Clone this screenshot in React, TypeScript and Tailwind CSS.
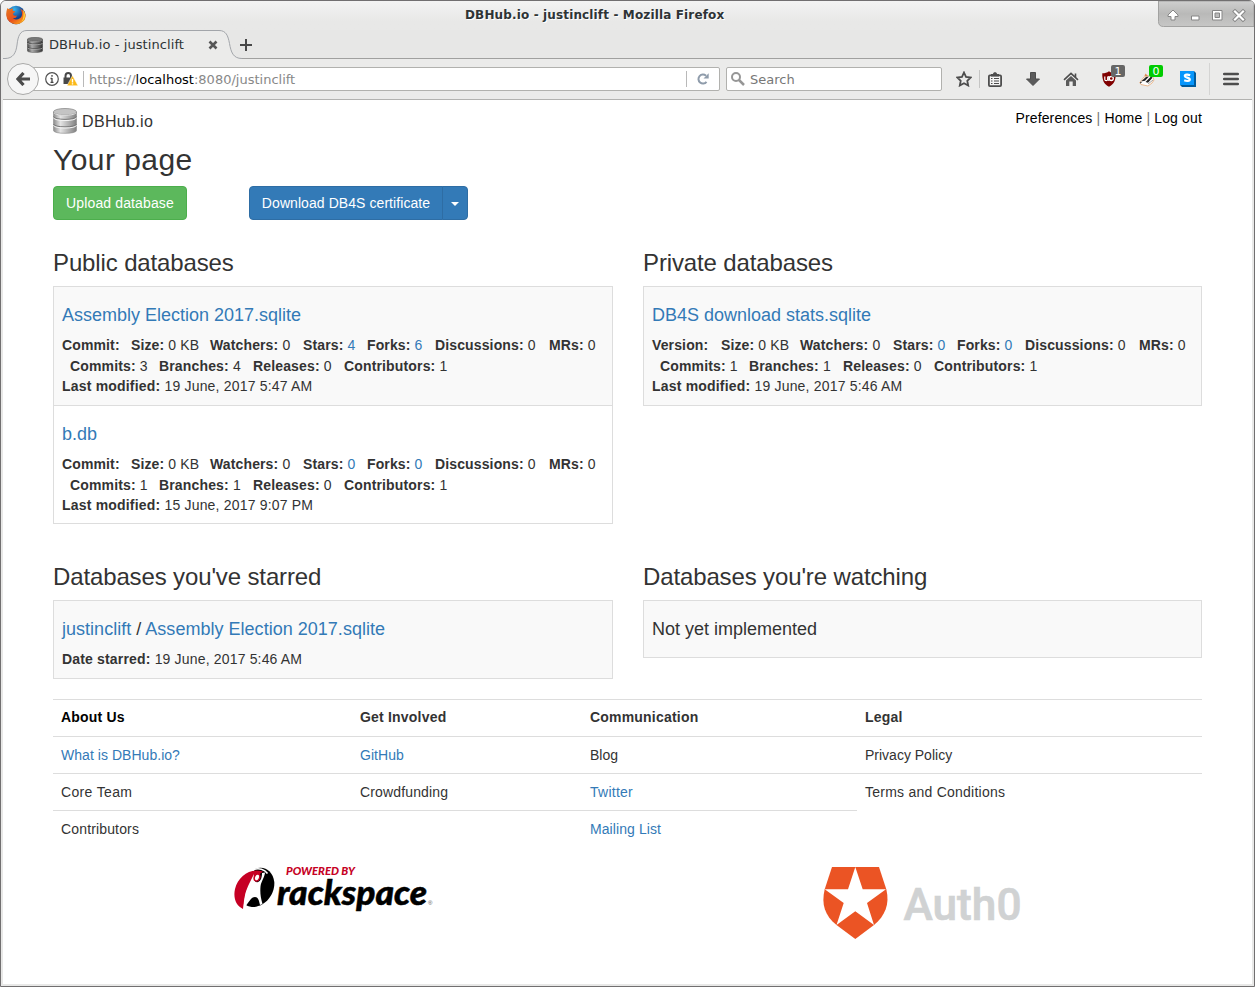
import React from "react";

type Stat = [label: string, value: string, width: string, link?: boolean];

function Link({ children }: { children: React.ReactNode }) {
  return <a className="text-[#337ab7]">{children}</a>;
}

function StatLine({ items, className }: { items: Stat[]; className: string }) {
  return (
    <div className={`flex whitespace-pre ${className}`}>
      {items.map(([label, value, width, link]) => (
        <div key={label} className={`shrink-0 ${width}`}>
          <b>{label}</b> {link ? <Link>{value}</Link> : value}
        </div>
      ))}
    </div>
  );
}

interface Database {
  name: string;
  ref: string;
  stars: string;
  forks: string;
  commits: string;
  branches: string;
  modified: string;
}

function DatabaseInfo({ db }: { db: Database }) {
  return (
    <>
      <h4 className="pt-[10px] pb-[10px] text-[18px] leading-5 tracking-normal text-[#337ab7]">{db.name}</h4>
      <StatLine
        className="h-[21px] leading-5 tracking-[0.13px]"
        items={[
          [db.ref, "", "w-[69px]"],
          ["Size:", "0 KB", "w-[79px]"],
          ["Watchers:", "0", "w-[93px]"],
          ["Stars:", db.stars, "w-[64px]", true],
          ["Forks:", db.forks, "w-[68px]", true],
          ["Discussions:", "0", "w-[114px]"],
          ["MRs:", "0", "w-[50px]"],
        ]}
      />
      <StatLine
        className="h-5 pl-2 leading-5 tracking-[0.15px]"
        items={[
          ["Commits:", db.commits, "w-[89px]"],
          ["Branches:", db.branches, "w-[94px]"],
          ["Releases:", "0", "w-[91px]"],
          ["Contributors:", "1", "w-[120px]"],
        ]}
      />
      <div className="leading-5 tracking-[0.19px]">
        <b>Last modified:</b> {db.modified}
      </div>
    </>
  );
}

const assembly: Database = {
  name: "Assembly Election 2017.sqlite", ref: "Commit:", stars: "4", forks: "6",
  commits: "3", branches: "4", modified: "19 June, 2017 5:47 AM",
};
const bdb: Database = {
  name: "b.db", ref: "Commit:", stars: "0", forks: "0",
  commits: "1", branches: "1", modified: "15 June, 2017 9:07 PM",
};
const stats: Database = {
  name: "DB4S download stats.sqlite", ref: "Version:", stars: "0", forks: "0",
  commits: "1", branches: "1", modified: "19 June, 2017 5:46 AM",
};

function DiskStack({ dark, className }: { dark?: boolean; className: string }) {
  const id = dark ? "diskDark" : "diskLight";
  const edge = dark ? "#444" : "#8a8a8a";
  return (
    <svg viewBox="0 0 24 26" preserveAspectRatio="none" className={className}>
      <defs>
        <linearGradient id={id}>
          <stop offset="0" stopColor={dark ? "#444" : "#8c8c8c"} />
          <stop offset=".3" stopColor={dark ? "#aaa" : "#e4e4e4"} />
          <stop offset="1" stopColor={dark ? "#333" : "#808080"} />
        </linearGradient>
      </defs>
      <path d="M.5 4v18.500c0 3.800 23 3.800 23 0V4z" fill={`url(#${id})`} stroke={edge} strokeWidth=".6" />
      {[8.5, 16].map((y) => (
        <g key={y} fill="none">
          <path d={`M.5 ${y}c0 3.800 23 3.800 23 0`} stroke={dark ? "#333" : "#777"} strokeWidth="1" />
          <path d={`M.5 ${y + 1.200}c0 3.800 23 3.800 23 0`} stroke={dark ? "#bbb" : "#f4f4f4"} strokeWidth="1" />
        </g>
      ))}
      <ellipse cx="12" cy="3.800" rx="11.500" ry="3.300" fill={dark ? "#777" : "#c4c4c4"} stroke={edge} strokeWidth=".8" />
      <path d="M1 4.800c2 3.400 20 3.400 22 0" fill="none" stroke={dark ? "#bbb" : "#f0f0f0"} strokeWidth=".8" />
    </svg>
  );
}

function FirefoxLogo() {
  return (
    <svg viewBox="0 0 20 20" className="h-5 w-5">
      <defs>
        <linearGradient id="fox" x1="0" y1="0" x2=".9" y2="1">
          <stop offset="0" stopColor="#e87b22" />
          <stop offset=".55" stopColor="#e8501b" />
          <stop offset="1" stopColor="#ffb21c" />
        </linearGradient>
        <radialGradient id="globe" cx=".4" cy=".2">
          <stop offset="0" stopColor="#36b5ee" />
          <stop offset="1" stopColor="#15408c" />
        </radialGradient>
      </defs>
      <circle cx="10" cy="10" r="9.3" fill="url(#globe)" />
      <path d="M1.5 3C2 4 3 4 4 4l3-.5c0 1-.6 1.5.2 2.5l2 .2c0 1-1.8 1.4-2 2.3C6.800 11 9 11 11 10.400c-.5 2-2 3-4 2.500 2.500 2.600 7 1.700 8.500-1.300 1.200-2.600.5-5.600-1.500-8.200 4 1.900 6 5 5.700 8A9.700 9 0 0 1 .4 11C0 8 .5 5 1.500 3z" fill="url(#fox)" />
      <path d="M17 4.500c3 4 2.700 9.500-1.500 12.500 2-3 2.500-7.500 1.500-12.500z" fill="#ffd33a" />
    </svg>
  );
}

function TitleBar() {
  return (
    <div className="flex h-[29px] items-start bg-gradient-to-b from-[#f3f3f3] to-[#e8e8e7] to-70%">
      <div className="pt-1 pl-[5px]"><FirefoxLogo /></div>
      <div className="flex-1 pl-[439px] font-['DejaVu_Sans'] text-[12px] leading-[28px] font-bold tracking-[0.14px] whitespace-pre text-[#2e3436] [text-shadow:1px_1px_0_#fff]">
        DBHub.io - justinclift - Mozilla Firefox
      </div>
      <svg viewBox="0 0 96 26" className="h-[26px] w-24">
        <defs>
          <linearGradient id="wm" x2="0" y2="1">
            <stop stopColor="#cfcfcf" />
            <stop offset=".5" stopColor="#b9b9b8" />
            <stop offset="1" stopColor="#c7c7c6" />
          </linearGradient>
        </defs>
        <path d="M.5 0v20.500q0 5 5 5H96V0z" fill="url(#wm)" stroke="#a2a2a1" />
        <g fill="none" strokeLinejoin="round">
          <path d="m15 9-5 5v1.500h3v3.500h4v-3.500h3V14z" fill="#fff" stroke="#858585" />
          <rect x="33.500" y="15" width="7.500" height="4" fill="#fff" stroke="#858585" />
          <rect x="54.500" y="9.500" width="9.500" height="9.500" fill="#fff" stroke="#858585" />
          <rect x="57" y="12" width="4.500" height="4.500" fill="#bbb" stroke="#858585" />
          <path d="m77 10.500 8 8m0-8-8 8" stroke="#858585" strokeWidth="4" strokeLinecap="square" />
          <path d="m77 10.500 8 8m0-8-8 8" stroke="#fff" strokeWidth="2.200" strokeLinecap="square" />
        </g>
      </svg>
    </div>
  );
}

function TabStrip() {
  return (
    <div className="flex h-[29px] bg-[#e7e7e6]">
      <div className="relative flex h-full w-[237px] items-center">
        <svg viewBox="0 0 239 29" className="absolute top-0 left-0 h-[29px] w-[239px]">
          <path d="M0 28.500h2C10 28.500 13 23 14 15 15 6 17 .5 24 .5h192c7 0 9 5 10.500 13C228 22 230 28.500 239 28.500V29H0z" fill="#ebebea" />
          <path d="M0 28.500h2C10 28.500 13 23 14 15 15 6 17 .5 24 .5h192c7 0 9 5 10.500 13C228 22 230 28.500 239 28.500" fill="none" stroke="#a2a5aa" />
        </svg>
        <DiskStack dark className="relative ml-[24px] h-4 w-4" />
        <div className="relative ml-[6px] w-[159px] font-['DejaVu_Sans'] text-[13px] leading-4 tracking-[0.08px] text-[#2e3436]">DBHub.io - justinclift</div>
        <svg viewBox="0 0 10 10" className="relative h-[10px] w-[10px]">
          <path d="m1.500 1.500 7 7m0-7-7 7" stroke="#555" strokeWidth="2.600" />
        </svg>
      </div>
      <div className="flex flex-1 items-center border-b border-[#a0a09f]">
        <svg viewBox="0 0 12 12" className="mt-px h-3 w-3"><path d="M6 0v12M0 6h12" stroke="#484848" strokeWidth="2" /></svg>
      </div>
    </div>
  );
}

function Badge({ text, className }: { text: string; className: string }) {
  return (
    <span className={`absolute flex h-3 w-[14px] items-center justify-center rounded-[2px] font-['DejaVu_Sans'] text-[11px] leading-none text-white ${className}`}>
      {text}
    </span>
  );
}

function Toolbar() {
  return (
    <div className="flex h-[41px] items-center border-b border-[#b2b2b0] bg-[#ebebea] font-['DejaVu_Sans'] text-[13px]">
      <div className="relative z-10 ml-1 flex h-8 w-8 items-center justify-center rounded-full border border-[#a9a9a8] bg-[#f6f6f6]">
        <svg viewBox="0 0 14 14" className="h-[14px] w-[14px]">
          <path d="M7.500 1 2 7l5.500 6M2.500 7H14" fill="none" stroke="#4b4b4b" strokeWidth="3.200" />
        </svg>
      </div>
      <div className="-ml-[8px] flex h-6 w-[689px] items-center rounded-r-[2px] border border-[#b1b1ae] bg-white pl-[13px]">
        <svg viewBox="0 0 14 14" className="h-[14px] w-[14px]">
          <circle cx="7" cy="7" r="6.300" fill="none" stroke="#505050" strokeWidth="1.200" />
          <path d="M7 3v1.800M7 6v4.500M5.500 6.500H7M5.500 10.300h3" fill="none" stroke="#444" strokeWidth="1.300" />
        </svg>
        <svg viewBox="0 0 15 14" className="ml-1 h-[14px] w-[15px]">
          <path d="M2.500 6V4C2.500 0 8 0 8 4v2" fill="none" stroke="#484848" strokeWidth="2" />
          <path d="M.5 5.500h9V12h-9z" fill="#484848" />
          <path d="M9.500 3.500 15 13.700H4z" fill="#fbb917" stroke="#fff" strokeWidth=".5" />
          <path d="M9.500 7v3.500M9.500 11.300v1.300" stroke="#fff" strokeWidth="1.400" />
        </svg>
        <div className="ml-[5px] h-4 w-px bg-[#b9b9b9]" />
        <div className="ml-[5px] flex-1 pt-px text-[#888]">
          https://<span className="text-black">localhost</span>:8080/justinclift
        </div>
        <div className="h-4 w-px bg-[#b9b9b9]" />
        <svg viewBox="0 0 12 12" className="mr-[10px] ml-[10px] h-3 w-3">
          <path d="M9.500 8.800A4.500 4.500 0 1 1 9 2.700" fill="none" stroke="#8f9cab" strokeWidth="2" />
          <path d="M11.700.3v5.200H6.500z" fill="#8f9cab" />
        </svg>
      </div>
      <div className="ml-[6px] flex h-6 w-[216px] items-center rounded-[2px] border border-[#b1b1ae] bg-white pl-1 text-[#777]">
        <svg viewBox="0 0 14 14" className="h-[14px] w-[14px]">
          <circle cx="5" cy="5" r="4" fill="none" stroke="#969696" strokeWidth="2" />
          <path d="m8 8 5 5" stroke="#969696" strokeWidth="2.500" />
        </svg>
        <span className="ml-[5px] pt-px">Search</span>
      </div>
      <div className="ml-[7px] flex w-[30px] justify-center">
        <svg viewBox="0 0 16 16" className="h-4 w-4">
          <path d="m8 1.500 2 4.400 4.800.6-3.500 3.300.9 4.700L8 12.200l-4.200 2.300.9-4.700L1.200 6.500 6 5.900z" fill="none" stroke="#4d4d4d" strokeWidth="1.800" />
        </svg>
      </div>
      <div className="flex h-[18px] w-8 items-center justify-center border-l border-[#c5c5c4] pr-px">
        <svg viewBox="0 0 14 15" className="h-[15px] w-[14px]">
          <rect x=".9" y="3.400" width="12.200" height="10.700" rx="1" fill="#f4f4f4" stroke="#4d4d4d" strokeWidth="1.800" />
          <path d="M3 4.500V2h2c0-2.500 4-2.500 4 0h2v2.500z" fill="#4d4d4d" />
          <path d="M3 6.500h1.500M6 6.500h5M3 9h1.500M6 9h5M3 11.500h1.500M6 11.500h5" stroke="#4d4d4d" strokeWidth="1.200" />
        </svg>
      </div>
      <div className="flex w-11 justify-center">
        <svg viewBox="0 0 14 14" className="h-[14px] w-[14px]"><path d="M4.500.5h5V7h4L7 13.500.5 7h4z" fill="#5b5b5b" stroke="#4d4d4d" /></svg>
      </div>
      <div className="flex w-8 justify-center">
        <svg viewBox="0 0 16 14" className="h-[14px] w-4">
          <path d="M3 8.500 8 4l5 4.500V14h-3.300V9.500H6.300V14H3z" fill="#5b5b5b" />
          <path d="M1 7.800 8 1.300l7 6.500M12.500 1.500V5" fill="none" stroke="#4d4d4d" strokeWidth="1.600" />
        </svg>
      </div>
      <div className="relative flex w-11 justify-center">
        <svg viewBox="0 0 16 16" className="h-4 w-4">
          <path d="M8 .3c2 1.400 4 2 6.700 2C15 9 13 13.500 8 15.800 3 13.500 1 9 1.300 2.300 4 2.300 6 1.700 8 .3z" fill="#800000" />
          <path d="M3.800 5.500v3q0 1.200 1.400 1.200T6.700 8.500v-3" fill="none" stroke="#fff" strokeWidth="1.200" />
          <circle cx="10.300" cy="7.500" r="2" fill="none" stroke="#fff" strokeWidth="1.300" />
          <path d="M7.800 5v5" stroke="#fff" strokeWidth="1.200" />
        </svg>
        <Badge text="1" className="-top-[6px] left-[24px] bg-[#666]" />
      </div>
      <div className="relative flex w-8 justify-center">
        <svg viewBox="0 0 16 16" className="h-4 w-4">
          <path d="M.8 11.500 5 6l8-2 2 5-2 3-4 3-7-1.500z" fill="#fff" stroke="#e9a873" strokeWidth=".8" />
          <path d="M2 10.500 7 6l3-.5-4 4.300zM6.500 11 12 5.500l1.500 1.300-4.500 5z" fill="#222" />
          <path d="m1 10.800 2 .7-1.500 1z" fill="#222" />
          <path d="m5.500 5 1-2.500L9 5z" fill="#d78d55" />
          <path d="m9 13 5-4" stroke="#888" strokeWidth=".8" />
        </svg>
        <Badge text="0" className="-top-[6px] left-[18px] bg-[#00cc00]" />
      </div>
      <div className="flex w-[46px] justify-center pl-1">
        <svg viewBox="0 0 16 16" className="h-4 w-4">
          <path d="M0 0h14l2 2v14H2l-2-2z" fill="#005b9d" />
          <path d="M0 0h14v14H0z" fill="#0796fc" />
          <path d="M10.200 4.200C8 3.300 4.800 3.400 4.800 5c0 2 5 1.300 5 3.500 0 1.800-3.300 1.800-5.600.8" fill="none" stroke="#fff" strokeWidth="2.200" />
        </svg>
      </div>
      <div className="flex h-8 flex-1 items-center justify-center border-l border-[#d4d4d3]">
        <svg viewBox="0 0 16 14" className="h-[14px] w-4"><path d="M1.200 2h13.600M1.200 7h13.600M1.200 12h13.600" stroke="#4d4d4d" strokeWidth="2.600" strokeLinecap="round" /></svg>
      </div>
    </div>
  );
}

const footerCols = [
  { width: "w-[299px]", title: "About Us", titleColor: "text-black", items: [["What is DBHub.io?", "tracking-[0.04px]", true], ["Core Team", "tracking-[0.35px]"], ["Contributors", "tracking-[0.15px]"]] },
  { width: "w-[230px]", title: "Get Involved", titleColor: "", items: [["GitHub", "tracking-[0.05px]", true], ["Crowdfunding", "tracking-[0.15px]"], ["", ""]] },
  { width: "w-[275px]", title: "Communication", titleColor: "", items: [["Blog", ""], ["Twitter", "tracking-[0.25px]", true], ["Mailing List", "tracking-[0.08px]", true]] },
  { width: "w-[345px]", title: "Legal", titleColor: "", items: [["Privacy Policy", ""], ["Terms and Conditions", "tracking-[0.24px]"]] },
] as { width: string; title: string; titleColor: string; items: [string, string, boolean?][] }[];

function Footer() {
  return (
    <div className="mt-5 flex h-[149px]">
      {footerCols.map((col) => (
        <div key={col.title} className={col.width}>
          <div className={`h-[37px] border-t border-[#ddd] px-2 pt-[7px] leading-5 font-bold tracking-[0.2px] ${col.titleColor}`}>{col.title}</div>
          {col.items.map(([text, tracking, link], i) => (
            <div key={i} className={`h-[37px] border-t border-[#ddd] px-2 pt-2 leading-5 ${tracking}`}>
              {link ? <Link>{text}</Link> : text}
            </div>
          ))}
        </div>
      ))}
    </div>
  );
}

function RackspaceLogo() {
  return (
    <svg viewBox="0 0 200 48" className="h-12 w-[200px] overflow-visible">
      <path d="M21 3C30-1 39 5 40.300 16 41 28 32 40 20 41c-3 0-6-.5-8-2L15 15z" fill="#000" />
      <path d="M29 5.500C17 1.500 4 10 1 23c-2 9 1 17 8 20L12 26l6-12z" fill="#c60024" />
      <path d="M15.500 17 20 8c-1 7 2 9 4 8 3-1 4-5 4-9l3-.500c-.3 5-4 9-4.500 14-.5 6 0 11 2 17.500L26 39c-1-5-2-8-5-8-4 0-6 5-8.500 8L9.500 43c0-10 2-18 6-26z" fill="#fff" />
      <path d="M18 4.200C25 .8 31 4 33.500 7.500" fill="none" stroke="#fff" strokeWidth="1.500" />
      <ellipse cx="23" cy="11.500" rx="2.600" ry="3.600" transform="rotate(22 23 11.500)" fill="#fff" stroke="#c60024" strokeWidth="1.500" />
      <text x="52" y="9" textLength="69" lengthAdjust="spacingAndGlyphs" fill="#c60024" className="font-['Lato'] text-[11px] font-black italic">POWERED BY</text>
      <text x="43" y="39" textLength="150" lengthAdjust="spacingAndGlyphs" fill="#000" stroke="#000" strokeWidth=".5" className="font-['Lato'] text-[35px] font-black italic">rackspace</text>
      <text x="194" y="39" fill="#555" className="font-['Liberation_Sans'] text-[6px]">®</text>
    </svg>
  );
}

function Auth0Logo() {
  return (
    <svg viewBox="0 0 200 74" className="h-[74px] w-[200px] overflow-visible">
      <path d="M10 1h47l7.300 22.300C68 38 63 50 52 59L33.300 73 14.500 59C3 50-1 38 2.700 23.300z" fill="#eb5424" />
      <path d="m33.300 1 7.400 22.300H64L45 37l7 22-18.700-13.700L14.500 59l7.200-22-19-13.700H26z" fill="#fff" />
      <text x="81.500" y="54" textLength="118" lengthAdjust="spacingAndGlyphs" fill="#d0d2d3" stroke="#d0d2d3" strokeWidth=".7" className="font-['Roboto'] text-[45px] font-medium">Auth0</text>
    </svg>
  );
}

function SectionTitle({ children }: { children: React.ReactNode }) {
  return <h3 className="h-[37px] text-[24px] leading-[26px] tracking-[-0.13px]">{children}</h3>;
}

export default function App() {
  return (
    <div className="h-[987px] w-[1255px] overflow-hidden bg-white">
      <div className="flex h-full w-full flex-col overflow-hidden rounded-t-[6px] border border-[#716f70] bg-[#e8e8e7]">
        <TitleBar />
        <div className="mx-[2px] mb-[2px] flex flex-1 flex-col overflow-hidden">
          <TabStrip />
          <Toolbar />
          <div className="flex-1 bg-white px-[50px] font-['Liberation_Sans',sans-serif] text-[14px] leading-5 text-[#333]">
            <div className="flex h-[47px] justify-between">
              <div className="flex pt-2">
                <DiskStack className="h-[26px] w-6" />
                <span className="ml-[5px] text-[16px] leading-[28px] tracking-[0.35px]">DBHub.io</span>
              </div>
              <div className="pt-2 tracking-[0.15px] whitespace-pre text-[#777]">
                <span className="text-black">Preferences</span> | <span className="text-black">Home</span> | <span className="text-black">Log out</span>
              </div>
            </div>
            <h2 className="h-[39px] text-[30px] leading-[26px] tracking-[0.45px]">Your page</h2>
            <div className="flex h-[34px]">
              <button className="w-[134px] rounded-[4px] border border-[#4cae4c] bg-[#5cb85c] tracking-[0.13px] text-white">Upload database</button>
              <button className="ml-[62px] w-[194px] rounded-l-[4px] border border-[#2e6da4] bg-[#337ab7] tracking-[0.07px] text-white">Download DB4S certificate</button>
              <button className="-ml-px flex w-[26px] items-center justify-center rounded-r-[4px] border border-[#2e6da4] bg-[#337ab7]">
                <svg viewBox="0 0 8 4" className="mt-px h-1 w-2"><path d="M0 0h8L4 4z" fill="#fff" /></svg>
              </button>
            </div>
            <div className="mt-[30px] flex h-[274px] justify-between">
              <div className="w-[560px]">
                <SectionTitle>Public databases</SectionTitle>
                <div className="-mt-px border border-[#ddd]">
                  <div className="h-[118px] bg-[#f9f9f9] px-2 pt-2"><DatabaseInfo db={assembly} /></div>
                  <div className="h-[118px] border-t border-[#ddd] px-2 pt-2"><DatabaseInfo db={bdb} /></div>
                </div>
              </div>
              <div className="w-[559px]">
                <SectionTitle>Private databases</SectionTitle>
                <div className="-mt-px h-[120px] border border-[#ddd] bg-[#f9f9f9] px-2 pt-2"><DatabaseInfo db={stats} /></div>
              </div>
            </div>
            <div className="mt-[40px] flex h-[115px] justify-between">
              <div className="w-[560px]">
                <SectionTitle>Databases you've starred</SectionTitle>
                <div className="-mt-px h-[79px] border border-[#ddd] bg-[#f9f9f9] px-2 pt-2">
                  <h4 className="py-[10px] text-[18px] leading-5 tracking-[0.02px]"><Link>justinclift</Link> / <Link>Assembly Election 2017.sqlite</Link></h4>
                  <div className="tracking-[0.17px]"><b>Date starred:</b> 19 June, 2017 5:46 AM</div>
                </div>
              </div>
              <div className="w-[559px]">
                <SectionTitle>Databases you're watching</SectionTitle>
                <div className="-mt-px h-[58px] border border-[#ddd] bg-[#f9f9f9] px-2 pt-2">
                  <h4 className="py-[10px] text-[18px] leading-5">Not yet implemented</h4>
                </div>
              </div>
            </div>
            <Footer />
            <div className="mt-[18px] flex">
              <div className="w-[589px] pl-[181px]"><RackspaceLogo /></div>
              <div className="pl-[180px]"><Auth0Logo /></div>
            </div>
          </div>
        </div>
      </div>
    </div>
  );
}
